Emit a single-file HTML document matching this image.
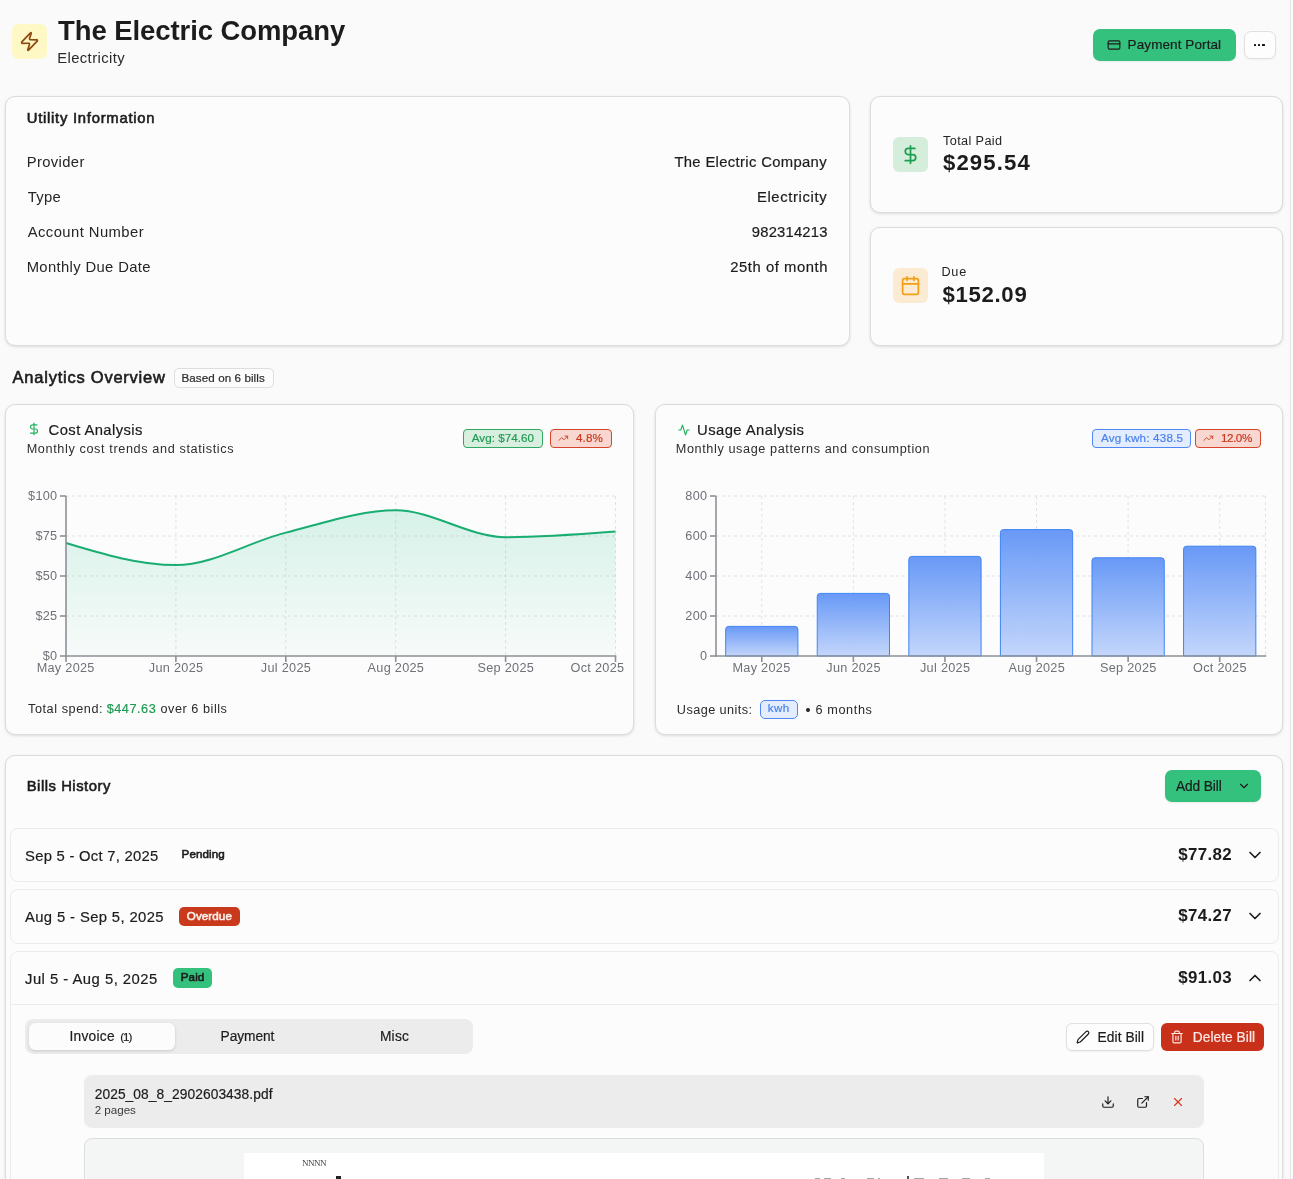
<!DOCTYPE html>
<html><head><meta charset="utf-8"><style>
html,body{margin:0;padding:0;}
body{width:1293px;height:1179px;overflow:hidden;position:relative;background:#fafafa;font-family:"Liberation Sans",sans-serif;}
.t{position:absolute;white-space:pre;}
.tl{position:absolute;left:0;top:0;width:1293px;height:1179px;will-change:transform;}
svg{position:absolute;overflow:visible;}
</style></head><body>
<div style="position:absolute;left:1290px;top:0px;width:1px;height:1179px;background:#e6e6e6;"></div>
<div style="position:absolute;left:12px;top:24px;width:35px;height:35px;background:#fdf8c6;border-radius:6px;"></div>
<div style="position:absolute;left:1093px;top:29px;width:143px;height:32px;background:#34c17e;border-radius:7px;box-shadow:0 1px 2px rgba(0,0,0,0.06);"></div>
<div style="position:absolute;left:1244px;top:31px;width:32px;height:28px;background:#fdfdfd;border:1px solid #e0e0e0;border-radius:7px;box-sizing:border-box;box-shadow:0 1px 2px rgba(0,0,0,0.05);"></div>
<div style="position:absolute;left:1253.7px;top:43.6px;width:2.400000000000091px;height:2.3999999999999986px;background:#111;border-radius:0.6px;"></div>
<div style="position:absolute;left:1258.0px;top:43.6px;width:2.400000000000091px;height:2.3999999999999986px;background:#111;border-radius:0.6px;"></div>
<div style="position:absolute;left:1262.3px;top:43.6px;width:2.400000000000091px;height:2.3999999999999986px;background:#111;border-radius:0.6px;"></div>
<div style="position:absolute;left:5px;top:96px;width:845px;height:250px;background:#fcfcfc;border:1px solid #dcdcdc;border-radius:10px;box-shadow:0 1px 3px rgba(0,0,0,0.12);box-sizing:border-box;"></div>
<div style="position:absolute;left:870px;top:96px;width:413px;height:117px;background:#fcfcfc;border:1px solid #dcdcdc;border-radius:10px;box-shadow:0 1px 3px rgba(0,0,0,0.12);box-sizing:border-box;"></div>
<div style="position:absolute;left:870px;top:227px;width:413px;height:119px;background:#fcfcfc;border:1px solid #dcdcdc;border-radius:10px;box-shadow:0 1px 3px rgba(0,0,0,0.12);box-sizing:border-box;"></div>
<div style="position:absolute;left:893px;top:137px;width:35px;height:35px;background:#d5eddb;border-radius:6px;"></div>
<div style="position:absolute;left:893px;top:268px;width:35px;height:35px;background:#fcebd3;border-radius:6px;"></div>
<div style="position:absolute;left:174px;top:368px;width:100px;height:20px;background:#fcfcfc;border:1px solid #dedede;border-radius:5px;box-sizing:border-box;"></div>
<div style="position:absolute;left:5px;top:404px;width:629px;height:331px;background:#fcfcfc;border:1px solid #dcdcdc;border-radius:10px;box-shadow:0 1px 3px rgba(0,0,0,0.12);box-sizing:border-box;"></div>
<div style="position:absolute;left:463px;top:429px;width:80px;height:19px;background:#d8efe0;border:1px solid #2ea862;border-radius:4px;box-sizing:border-box;"></div>
<div style="position:absolute;left:550px;top:429px;width:62px;height:19px;background:#f8d7d0;border:1px solid #d6442a;border-radius:4px;box-sizing:border-box;"></div>
<div style="position:absolute;left:655px;top:404px;width:628px;height:331px;background:#fcfcfc;border:1px solid #dcdcdc;border-radius:10px;box-shadow:0 1px 3px rgba(0,0,0,0.12);box-sizing:border-box;"></div>
<div style="position:absolute;left:1092px;top:429px;width:99px;height:19px;background:#e4edfd;border:1px solid #4f88f2;border-radius:4px;box-sizing:border-box;"></div>
<div style="position:absolute;left:1195px;top:429px;width:66px;height:19px;background:#f8d7d0;border:1px solid #d6442a;border-radius:4px;box-sizing:border-box;"></div>
<div style="position:absolute;left:5px;top:755px;width:1278px;height:505px;background:#fcfcfc;border:1px solid #dcdcdc;border-radius:10px;box-shadow:0 1px 3px rgba(0,0,0,0.12);box-sizing:border-box;"></div>
<div style="position:absolute;left:1165px;top:770px;width:96px;height:32px;background:#34c17e;border-radius:7px;box-shadow:0 1px 2px rgba(0,0,0,0.08);"></div>
<div style="position:absolute;left:10px;top:828px;width:1269px;height:54px;background:#fcfcfc;border:1px solid #ececec;border-radius:8px;box-sizing:border-box;"></div>
<div style="position:absolute;left:10px;top:889px;width:1269px;height:55px;background:#fcfcfc;border:1px solid #ececec;border-radius:8px;box-sizing:border-box;"></div>
<div style="position:absolute;left:10px;top:951px;width:1269px;height:309px;background:#fcfcfc;border:1px solid #ececec;border-radius:8px;box-sizing:border-box;"></div>
<div style="position:absolute;left:175px;top:846px;width:57px;height:19px;background:#fdfdfd;border-radius:5px;"></div>
<div style="position:absolute;left:179px;top:907px;width:61px;height:19px;background:#c93a1c;border-radius:5px;"></div>
<div style="position:absolute;left:173px;top:968px;width:39px;height:20px;background:#34c17e;border-radius:5px;"></div>
<div style="position:absolute;left:11px;top:1004px;width:1267px;height:1px;background:#ececec;"></div>
<div style="position:absolute;left:25px;top:1019px;width:448px;height:35px;background:#ececec;border-radius:8px;"></div>
<div style="position:absolute;left:29px;top:1023px;width:146px;height:27px;background:#fcfcfc;border-radius:6px;box-shadow:0 1px 3px rgba(0,0,0,0.16);"></div>
<div style="position:absolute;left:1066px;top:1023px;width:88px;height:28px;background:#fdfdfd;border:1px solid #e0e0e0;border-radius:6px;box-sizing:border-box;box-shadow:0 1px 2px rgba(0,0,0,0.06);"></div>
<div style="position:absolute;left:1161px;top:1023px;width:103px;height:28px;background:#c9301a;border-radius:6px;"></div>
<div style="position:absolute;left:84px;top:1075px;width:1120px;height:53px;background:#ececec;border-radius:8px;"></div>
<div style="position:absolute;left:84px;top:1138px;width:1120px;height:122px;background:#f4f5f5;border:1px solid #dddddd;border-radius:8px;box-sizing:border-box;"></div>
<div style="position:absolute;left:244px;top:1153px;width:800px;height:107px;background:#ffffff;"></div>
<svg style="left:0;top:0" width="1293" height="1179">
<defs><linearGradient id="cg" x1="0" y1="0" x2="0" y2="1"><stop offset="0%" stop-color="#10b981" stop-opacity="0.16"/><stop offset="100%" stop-color="#10b981" stop-opacity="0.02"/></linearGradient>
<linearGradient id="bg" x1="0" y1="0" x2="0" y2="1"><stop offset="0%" stop-color="#6496f6" stop-opacity="0.97"/><stop offset="100%" stop-color="#c2d5fb" stop-opacity="0.97"/></linearGradient></defs>
<line x1="66" x2="615.5" y1="496" y2="496" stroke="#e2e2e2" stroke-dasharray="3 3"/>
<line x1="66" x2="615.5" y1="536" y2="536" stroke="#e2e2e2" stroke-dasharray="3 3"/>
<line x1="66" x2="615.5" y1="576" y2="576" stroke="#e2e2e2" stroke-dasharray="3 3"/>
<line x1="66" x2="615.5" y1="616" y2="616" stroke="#e2e2e2" stroke-dasharray="3 3"/>
<line x1="175.9" x2="175.9" y1="496" y2="656" stroke="#e2e2e2" stroke-dasharray="3 3"/>
<line x1="285.8" x2="285.8" y1="496" y2="656" stroke="#e2e2e2" stroke-dasharray="3 3"/>
<line x1="395.70000000000005" x2="395.70000000000005" y1="496" y2="656" stroke="#e2e2e2" stroke-dasharray="3 3"/>
<line x1="505.6" x2="505.6" y1="496" y2="656" stroke="#e2e2e2" stroke-dasharray="3 3"/>
<line x1="615.5" x2="615.5" y1="496" y2="656" stroke="#e2e2e2" stroke-dasharray="3 3"/>
<path d="M66.00,543.04C102.63,554.08 139.27,565.12 175.90,565.12C212.53,565.12 249.17,541.77 285.80,532.64C322.43,523.51 359.07,510.35 395.70,510.35C432.33,510.35 468.97,537.17 505.60,537.17C542.23,537.17 578.87,534.33 615.50,531.49L615.5,656L66,656Z" fill="url(#cg)"/>
<path d="M66.00,543.04C102.63,554.08 139.27,565.12 175.90,565.12C212.53,565.12 249.17,541.77 285.80,532.64C322.43,523.51 359.07,510.35 395.70,510.35C432.33,510.35 468.97,537.17 505.60,537.17C542.23,537.17 578.87,534.33 615.50,531.49" fill="none" stroke="#19ad72" stroke-width="2"/>
<line x1="66" x2="66" y1="496" y2="656.8" stroke="#8d9097" stroke-width="1.6"/>
<line x1="65.2" x2="616.3" y1="656" y2="656" stroke="#8d9097" stroke-width="1.6"/>
<line x1="60" x2="66" y1="496" y2="496" stroke="#8d9097" stroke-width="1.6"/>
<line x1="60" x2="66" y1="536" y2="536" stroke="#8d9097" stroke-width="1.6"/>
<line x1="60" x2="66" y1="576" y2="576" stroke="#8d9097" stroke-width="1.6"/>
<line x1="60" x2="66" y1="616" y2="616" stroke="#8d9097" stroke-width="1.6"/>
<line x1="60" x2="66" y1="656" y2="656" stroke="#8d9097" stroke-width="1.6"/>
<line x1="66.0" x2="66.0" y1="656" y2="662" stroke="#8d9097" stroke-width="1.6"/>
<line x1="175.9" x2="175.9" y1="656" y2="662" stroke="#8d9097" stroke-width="1.6"/>
<line x1="285.8" x2="285.8" y1="656" y2="662" stroke="#8d9097" stroke-width="1.6"/>
<line x1="395.70000000000005" x2="395.70000000000005" y1="656" y2="662" stroke="#8d9097" stroke-width="1.6"/>
<line x1="505.6" x2="505.6" y1="656" y2="662" stroke="#8d9097" stroke-width="1.6"/>
<line x1="615.5" x2="615.5" y1="656" y2="662" stroke="#8d9097" stroke-width="1.6"/>
<line x1="716" x2="1265.5" y1="496" y2="496" stroke="#e2e2e2" stroke-dasharray="3 3"/>
<line x1="716" x2="1265.5" y1="536" y2="536" stroke="#e2e2e2" stroke-dasharray="3 3"/>
<line x1="716" x2="1265.5" y1="576" y2="576" stroke="#e2e2e2" stroke-dasharray="3 3"/>
<line x1="716" x2="1265.5" y1="616" y2="616" stroke="#e2e2e2" stroke-dasharray="3 3"/>
<line x1="761.79" x2="761.79" y1="496" y2="656" stroke="#e2e2e2" stroke-dasharray="3 3"/>
<line x1="853.38" x2="853.38" y1="496" y2="656" stroke="#e2e2e2" stroke-dasharray="3 3"/>
<line x1="944.96" x2="944.96" y1="496" y2="656" stroke="#e2e2e2" stroke-dasharray="3 3"/>
<line x1="1036.54" x2="1036.54" y1="496" y2="656" stroke="#e2e2e2" stroke-dasharray="3 3"/>
<line x1="1128.12" x2="1128.12" y1="496" y2="656" stroke="#e2e2e2" stroke-dasharray="3 3"/>
<line x1="1219.71" x2="1219.71" y1="496" y2="656" stroke="#e2e2e2" stroke-dasharray="3 3"/>
<line x1="1265.50" x2="1265.50" y1="496" y2="656" stroke="#e2e2e2" stroke-dasharray="3 3"/>
<path d="M725.66,656 L725.66,629.40 Q725.66,626.40 728.66,626.40 L794.92,626.40 Q797.92,626.40 797.92,629.40 L797.92,656 Z" fill="url(#bg)" stroke="#3f84f6" stroke-width="1"/>
<path d="M817.24,656 L817.24,596.40 Q817.24,593.40 820.24,593.40 L886.51,593.40 Q889.51,593.40 889.51,596.40 L889.51,656 Z" fill="url(#bg)" stroke="#3f84f6" stroke-width="1"/>
<path d="M908.82,656 L908.82,559.40 Q908.82,556.40 911.82,556.40 L978.09,556.40 Q981.09,556.40 981.09,559.40 L981.09,656 Z" fill="url(#bg)" stroke="#3f84f6" stroke-width="1"/>
<path d="M1000.41,656 L1000.41,532.60 Q1000.41,529.60 1003.41,529.60 L1069.67,529.60 Q1072.67,529.60 1072.67,532.60 L1072.67,656 Z" fill="url(#bg)" stroke="#3f84f6" stroke-width="1"/>
<path d="M1091.99,656 L1091.99,560.80 Q1091.99,557.80 1094.99,557.80 L1161.26,557.80 Q1164.26,557.80 1164.26,560.80 L1164.26,656 Z" fill="url(#bg)" stroke="#3f84f6" stroke-width="1"/>
<path d="M1183.57,656 L1183.57,549.20 Q1183.57,546.20 1186.57,546.20 L1252.84,546.20 Q1255.84,546.20 1255.84,549.20 L1255.84,656 Z" fill="url(#bg)" stroke="#3f84f6" stroke-width="1"/>
<line x1="716" x2="716" y1="496" y2="656.8" stroke="#8d9097" stroke-width="1.6"/>
<line x1="715.2" x2="1266.3" y1="656" y2="656" stroke="#8d9097" stroke-width="1.6"/>
<line x1="710" x2="716" y1="496" y2="496" stroke="#8d9097" stroke-width="1.6"/>
<line x1="710" x2="716" y1="536" y2="536" stroke="#8d9097" stroke-width="1.6"/>
<line x1="710" x2="716" y1="576" y2="576" stroke="#8d9097" stroke-width="1.6"/>
<line x1="710" x2="716" y1="616" y2="616" stroke="#8d9097" stroke-width="1.6"/>
<line x1="710" x2="716" y1="656" y2="656" stroke="#8d9097" stroke-width="1.6"/>
<line x1="761.79" x2="761.79" y1="656" y2="662" stroke="#8d9097" stroke-width="1.6"/>
<line x1="853.38" x2="853.38" y1="656" y2="662" stroke="#8d9097" stroke-width="1.6"/>
<line x1="944.96" x2="944.96" y1="656" y2="662" stroke="#8d9097" stroke-width="1.6"/>
<line x1="1036.54" x2="1036.54" y1="656" y2="662" stroke="#8d9097" stroke-width="1.6"/>
<line x1="1128.12" x2="1128.12" y1="656" y2="662" stroke="#8d9097" stroke-width="1.6"/>
<line x1="1219.71" x2="1219.71" y1="656" y2="662" stroke="#8d9097" stroke-width="1.6"/>
</svg>
<div style="position:absolute;left:760px;top:700px;width:38px;height:19px;background:#e4edfd;border:1px solid #4f88f2;border-radius:5px;box-sizing:border-box;"></div>
<div style="position:absolute;left:806px;top:708px;width:4px;height:4px;background:#222;border-radius:50%;"></div>
<div style="position:absolute;left:814.7px;top:1177.6px;width:5.2999999999999545px;height:1.400000000000091px;background:#a5a5a5;"></div>
<div style="position:absolute;left:824px;top:1177.6px;width:7px;height:1.400000000000091px;background:#a5a5a5;"></div>
<div style="position:absolute;left:841px;top:1177.6px;width:4px;height:1.400000000000091px;background:#a5a5a5;"></div>
<div style="position:absolute;left:866.5px;top:1177.6px;width:7.0px;height:1.400000000000091px;background:#a5a5a5;"></div>
<div style="position:absolute;left:878px;top:1177.6px;width:2px;height:1.400000000000091px;background:#a5a5a5;"></div>
<div style="position:absolute;left:914px;top:1177.6px;width:10px;height:1.400000000000091px;background:#a5a5a5;"></div>
<div style="position:absolute;left:939px;top:1177.6px;width:9px;height:1.400000000000091px;background:#a5a5a5;"></div>
<div style="position:absolute;left:961.6px;top:1177.6px;width:8.399999999999977px;height:1.400000000000091px;background:#a5a5a5;"></div>
<div style="position:absolute;left:985px;top:1177.6px;width:4.5px;height:1.400000000000091px;background:#a5a5a5;"></div>
<div style="position:absolute;left:907px;top:1175.5px;width:2px;height:3.5px;background:#555;"></div>
<div style="position:absolute;left:336px;top:1176px;width:5px;height:3px;background:#222;"></div>
<div class="tl">
<div class="t" style="left:58.00px;top:16.74px;font-size:27.48px;line-height:27.48px;font-weight:700;color:#1c1c1c;letter-spacing:-0.065px;">The Electric Company</div>
<div class="t" style="left:57.20px;top:51.47px;font-size:14.8px;line-height:14.8px;font-weight:400;color:#2a2a2a;letter-spacing:0.409px;">Electricity</div>
<div class="t" style="left:1127.60px;top:37.87px;font-size:13.5px;line-height:13.5px;font-weight:400;color:#1c1c1c;letter-spacing:0.093px;-webkit-text-stroke:0.2px #1c1c1c;">Payment Portal</div>
<div class="t" style="left:26.70px;top:111.47px;font-size:14.8px;line-height:14.8px;font-weight:400;color:#1c1c1c;letter-spacing:0.752px;-webkit-text-stroke:0.6px #1c1c1c;">Utility Information</div>
<div class="t" style="left:26.70px;top:155.47px;font-size:14.8px;line-height:14.8px;font-weight:400;color:#252525;letter-spacing:0.361px;">Provider</div>
<div class="t" style="left:27.70px;top:190.47px;font-size:14.8px;line-height:14.8px;font-weight:400;color:#252525;letter-spacing:0.317px;">Type</div>
<div class="t" style="left:27.70px;top:225.47px;font-size:14.8px;line-height:14.8px;font-weight:400;color:#252525;letter-spacing:0.440px;">Account Number</div>
<div class="t" style="left:26.70px;top:260.47px;font-size:14.8px;line-height:14.8px;font-weight:400;color:#252525;letter-spacing:0.360px;">Monthly Due Date</div>
<div class="t" style="left:674.40px;top:155.47px;font-size:14.8px;line-height:14.8px;font-weight:400;color:#1c1c1c;letter-spacing:0.350px;-webkit-text-stroke:0.2px #1c1c1c;">The Electric Company</div>
<div class="t" style="left:756.90px;top:190.47px;font-size:14.8px;line-height:14.8px;font-weight:400;color:#1c1c1c;letter-spacing:0.639px;-webkit-text-stroke:0.2px #1c1c1c;">Electricity</div>
<div class="t" style="left:751.80px;top:225.47px;font-size:14.8px;line-height:14.8px;font-weight:400;color:#1c1c1c;letter-spacing:0.196px;-webkit-text-stroke:0.2px #1c1c1c;">982314213</div>
<div class="t" style="left:730.30px;top:260.47px;font-size:14.8px;line-height:14.8px;font-weight:400;color:#1c1c1c;letter-spacing:0.554px;-webkit-text-stroke:0.2px #1c1c1c;">25th of month</div>
<div class="t" style="left:943.00px;top:135.27px;font-size:12.68px;line-height:12.68px;font-weight:400;color:#252525;letter-spacing:0.378px;">Total Paid</div>
<div class="t" style="left:943.00px;top:151.81px;font-size:22.2px;line-height:22.2px;font-weight:700;color:#1c1c1c;letter-spacing:1.090px;">$295.54</div>
<div class="t" style="left:941.40px;top:266.27px;font-size:12.68px;line-height:12.68px;font-weight:400;color:#252525;letter-spacing:0.801px;">Due</div>
<div class="t" style="left:942.40px;top:283.61px;font-size:22.2px;line-height:22.2px;font-weight:700;color:#1c1c1c;letter-spacing:0.690px;">$152.09</div>
<div class="t" style="left:12.60px;top:369.43px;font-size:16.5px;line-height:16.5px;font-weight:400;color:#1c1c1c;letter-spacing:0.761px;-webkit-text-stroke:0.6px #1c1c1c;">Analytics Overview</div>
<div class="t" style="left:181.50px;top:371.86px;font-size:11.63px;line-height:11.63px;font-weight:400;color:#2a2a2a;letter-spacing:0.076px;-webkit-text-stroke:0.2px #2a2a2a;">Based on 6 bills</div>
<div class="t" style="left:48.60px;top:423.07px;font-size:14.8px;line-height:14.8px;font-weight:400;color:#1c1c1c;letter-spacing:0.422px;-webkit-text-stroke:0.2px #1c1c1c;">Cost Analysis</div>
<div class="t" style="left:26.70px;top:443.07px;font-size:12.68px;line-height:12.68px;font-weight:400;color:#2e2e2e;letter-spacing:0.612px;">Monthly cost trends and statistics</div>
<div class="t" style="left:471.80px;top:432.26px;font-size:11.63px;line-height:11.63px;font-weight:400;color:#1f9a52;letter-spacing:0.023px;-webkit-text-stroke:0.2px #1f9a52;">Avg: $74.60</div>
<div class="t" style="left:576.00px;top:432.26px;font-size:11.63px;line-height:11.63px;font-weight:400;color:#c9381f;letter-spacing:0.113px;-webkit-text-stroke:0.2px #c9381f;">4.8%</div>
<div class="t" style="left:697.00px;top:423.47px;font-size:14.8px;line-height:14.8px;font-weight:400;color:#1c1c1c;letter-spacing:0.447px;-webkit-text-stroke:0.2px #1c1c1c;">Usage Analysis</div>
<div class="t" style="left:675.80px;top:443.07px;font-size:12.68px;line-height:12.68px;font-weight:400;color:#2e2e2e;letter-spacing:0.594px;">Monthly usage patterns and consumption</div>
<div class="t" style="left:1101.10px;top:432.26px;font-size:11.63px;line-height:11.63px;font-weight:400;color:#4a82ec;letter-spacing:0.199px;-webkit-text-stroke:0.2px #4a82ec;">Avg kwh: 438.5</div>
<div class="t" style="left:1220.90px;top:432.26px;font-size:11.63px;line-height:11.63px;font-weight:400;color:#c9381f;letter-spacing:-0.406px;-webkit-text-stroke:0.2px #c9381f;">12.0%</div>
<div class="t" style="left:26.70px;top:779.47px;font-size:14.8px;line-height:14.8px;font-weight:400;color:#1c1c1c;letter-spacing:0.535px;-webkit-text-stroke:0.6px #1c1c1c;">Bills History</div>
<div class="t" style="left:1176.00px;top:780.37px;font-size:13.74px;line-height:13.74px;font-weight:400;color:#1c1c1c;letter-spacing:-0.117px;-webkit-text-stroke:0.2px #1c1c1c;">Add Bill</div>
<div class="t" style="left:25.00px;top:849.17px;font-size:14.8px;line-height:14.8px;font-weight:400;color:#1c1c1c;letter-spacing:0.273px;-webkit-text-stroke:0.2px #1c1c1c;">Sep 5 - Oct 7, 2025</div>
<div class="t" style="left:1178.20px;top:847.39px;font-size:16.91px;line-height:16.91px;font-weight:700;color:#1c1c1c;letter-spacing:0.339px;">$77.82</div>
<div class="t" style="left:25.00px;top:910.17px;font-size:14.8px;line-height:14.8px;font-weight:400;color:#1c1c1c;letter-spacing:0.384px;-webkit-text-stroke:0.2px #1c1c1c;">Aug 5 - Sep 5, 2025</div>
<div class="t" style="left:1178.20px;top:908.39px;font-size:16.91px;line-height:16.91px;font-weight:700;color:#1c1c1c;letter-spacing:0.339px;">$74.27</div>
<div class="t" style="left:25.00px;top:971.67px;font-size:14.8px;line-height:14.8px;font-weight:400;color:#1c1c1c;letter-spacing:0.490px;-webkit-text-stroke:0.2px #1c1c1c;">Jul 5 - Aug 5, 2025</div>
<div class="t" style="left:1178.20px;top:969.89px;font-size:16.91px;line-height:16.91px;font-weight:700;color:#1c1c1c;letter-spacing:0.339px;">$91.03</div>
<div class="t" style="left:181.60px;top:848.46px;font-size:11.63px;line-height:11.63px;font-weight:400;color:#1c1c1c;letter-spacing:0.084px;-webkit-text-stroke:0.6px #1c1c1c;">Pending</div>
<div class="t" style="left:186.80px;top:909.66px;font-size:11.63px;line-height:11.63px;font-weight:400;color:#fbeee9;letter-spacing:0.080px;-webkit-text-stroke:0.6px #fbeee9;">Overdue</div>
<div class="t" style="left:180.80px;top:970.96px;font-size:11.63px;line-height:11.63px;font-weight:400;color:#1c1c1c;letter-spacing:0.066px;-webkit-text-stroke:0.6px #1c1c1c;">Paid</div>
<div class="t" style="left:69.40px;top:1030.37px;font-size:13.74px;line-height:13.74px;font-weight:400;color:#1c1c1c;letter-spacing:0.270px;-webkit-text-stroke:0.2px #1c1c1c;">Invoice</div>
<div class="t" style="left:120.30px;top:1030.66px;font-size:11.63px;line-height:11.63px;font-weight:400;color:#1c1c1c;letter-spacing:-1.068px;-webkit-text-stroke:0.2px #1c1c1c;">(1)</div>
<div class="t" style="left:220.60px;top:1030.37px;font-size:13.74px;line-height:13.74px;font-weight:400;color:#1c1c1c;letter-spacing:-0.064px;-webkit-text-stroke:0.2px #1c1c1c;">Payment</div>
<div class="t" style="left:379.90px;top:1030.37px;font-size:13.74px;line-height:13.74px;font-weight:400;color:#1c1c1c;letter-spacing:0.280px;-webkit-text-stroke:0.2px #1c1c1c;">Misc</div>
<div class="t" style="left:1097.60px;top:1030.87px;font-size:13.74px;line-height:13.74px;font-weight:400;color:#1c1c1c;letter-spacing:0.069px;-webkit-text-stroke:0.2px #1c1c1c;">Edit Bill</div>
<div class="t" style="left:1192.80px;top:1030.87px;font-size:13.74px;line-height:13.74px;font-weight:400;color:#fbe9e4;letter-spacing:0.042px;-webkit-text-stroke:0.2px #fbe9e4;">Delete Bill</div>
<div class="t" style="left:94.70px;top:1087.97px;font-size:13.74px;line-height:13.74px;font-weight:400;color:#1c1c1c;letter-spacing:0.093px;-webkit-text-stroke:0.2px #1c1c1c;">2025_08_8_2902603438.pdf</div>
<div class="t" style="left:94.70px;top:1103.66px;font-size:11.63px;line-height:11.63px;font-weight:400;color:#3a3a3a;letter-spacing:-0.026px;">2 pages</div>
<div class="t" style="left:302.00px;top:1159.38px;font-size:9.0px;line-height:9.0px;font-weight:400;color:#444;letter-spacing:-0.500px;font-family:'Liberation Serif',serif;">NNNN</div>
<div class="t" style="left:28.06px;top:490.27px;font-size:12.68px;line-height:12.68px;font-weight:400;color:#6f7178;letter-spacing:0.300px;">$100</div>
<div class="t" style="left:35.40px;top:530.27px;font-size:12.68px;line-height:12.68px;font-weight:400;color:#6f7178;letter-spacing:0.300px;">$75</div>
<div class="t" style="left:35.40px;top:570.27px;font-size:12.68px;line-height:12.68px;font-weight:400;color:#6f7178;letter-spacing:0.300px;">$50</div>
<div class="t" style="left:35.40px;top:610.27px;font-size:12.68px;line-height:12.68px;font-weight:400;color:#6f7178;letter-spacing:0.300px;">$25</div>
<div class="t" style="left:42.75px;top:650.27px;font-size:12.68px;line-height:12.68px;font-weight:400;color:#6f7178;letter-spacing:0.300px;">$0</div>
<div class="t" style="left:685.30px;top:490.27px;font-size:12.68px;line-height:12.68px;font-weight:400;color:#6f7178;letter-spacing:0.300px;">800</div>
<div class="t" style="left:685.30px;top:530.27px;font-size:12.68px;line-height:12.68px;font-weight:400;color:#6f7178;letter-spacing:0.300px;">600</div>
<div class="t" style="left:685.30px;top:570.27px;font-size:12.68px;line-height:12.68px;font-weight:400;color:#6f7178;letter-spacing:0.300px;">400</div>
<div class="t" style="left:685.30px;top:610.27px;font-size:12.68px;line-height:12.68px;font-weight:400;color:#6f7178;letter-spacing:0.300px;">200</div>
<div class="t" style="left:700.00px;top:650.27px;font-size:12.68px;line-height:12.68px;font-weight:400;color:#6f7178;letter-spacing:0.300px;">0</div>
<div class="t" style="left:36.65px;top:661.87px;font-size:12.68px;line-height:12.68px;font-weight:400;color:#6f7178;letter-spacing:0.300px;">May 2025</div>
<div class="t" style="left:148.80px;top:661.87px;font-size:12.68px;line-height:12.68px;font-weight:400;color:#6f7178;letter-spacing:0.300px;">Jun 2025</div>
<div class="t" style="left:260.82px;top:661.87px;font-size:12.68px;line-height:12.68px;font-weight:400;color:#6f7178;letter-spacing:0.300px;">Jul 2025</div>
<div class="t" style="left:367.54px;top:661.87px;font-size:12.68px;line-height:12.68px;font-weight:400;color:#6f7178;letter-spacing:0.300px;">Aug 2025</div>
<div class="t" style="left:477.44px;top:661.87px;font-size:12.68px;line-height:12.68px;font-weight:400;color:#6f7178;letter-spacing:0.300px;">Sep 2025</div>
<div class="t" style="left:570.56px;top:661.87px;font-size:12.68px;line-height:12.68px;font-weight:400;color:#6f7178;letter-spacing:0.300px;">Oct 2025</div>
<div class="t" style="left:732.44px;top:661.87px;font-size:12.68px;line-height:12.68px;font-weight:400;color:#6f7178;letter-spacing:0.300px;">May 2025</div>
<div class="t" style="left:826.28px;top:661.87px;font-size:12.68px;line-height:12.68px;font-weight:400;color:#6f7178;letter-spacing:0.300px;">Jun 2025</div>
<div class="t" style="left:919.98px;top:661.87px;font-size:12.68px;line-height:12.68px;font-weight:400;color:#6f7178;letter-spacing:0.300px;">Jul 2025</div>
<div class="t" style="left:1008.39px;top:661.87px;font-size:12.68px;line-height:12.68px;font-weight:400;color:#6f7178;letter-spacing:0.300px;">Aug 2025</div>
<div class="t" style="left:1099.97px;top:661.87px;font-size:12.68px;line-height:12.68px;font-weight:400;color:#6f7178;letter-spacing:0.300px;">Sep 2025</div>
<div class="t" style="left:1192.97px;top:661.87px;font-size:12.68px;line-height:12.68px;font-weight:400;color:#6f7178;letter-spacing:0.300px;">Oct 2025</div>
<div class="t" style="left:28.00px;top:703.27px;font-size:12.68px;line-height:12.68px;font-weight:400;color:#2a2a2a;letter-spacing:0.562px;">Total spend:</div>
<div class="t" style="left:106.70px;top:703.27px;font-size:12.68px;line-height:12.68px;font-weight:400;color:#1f9a52;letter-spacing:0.540px;-webkit-text-stroke:0.2px #1f9a52;">$447.63</div>
<div class="t" style="left:160.50px;top:703.27px;font-size:12.68px;line-height:12.68px;font-weight:400;color:#2a2a2a;letter-spacing:0.533px;">over 6 bills</div>
<div class="t" style="left:676.80px;top:704.27px;font-size:12.68px;line-height:12.68px;font-weight:400;color:#2a2a2a;letter-spacing:0.444px;">Usage units:</div>
<div class="t" style="left:767.70px;top:701.66px;font-size:11.63px;line-height:11.63px;font-weight:400;color:#4a82ec;letter-spacing:0.396px;-webkit-text-stroke:0.2px #4a82ec;">kwh</div>
<div class="t" style="left:815.40px;top:704.27px;font-size:12.68px;line-height:12.68px;font-weight:400;color:#2a2a2a;letter-spacing:0.630px;">6 months</div>
</div>
<svg style="left:19.1px;top:31.1px" width="21" height="21" viewBox="0 0 24 24" fill="none" stroke="#8f4a10" stroke-width="2" stroke-linecap="round" stroke-linejoin="round"><path d="M4 14a1 1 0 0 1-.78-1.63l9.9-10.2a.5.5 0 0 1 .86.46l-1.92 6.02A1 1 0 0 0 13 10h7a1 1 0 0 1 .78 1.63l-9.9 10.2a.5.5 0 0 1-.86-.46l1.92-6.02A1 1 0 0 0 11 14z"/></svg>
<svg style="left:1107px;top:38px" width="14" height="14" viewBox="0 0 24 24" fill="none" stroke="#1c1c1c" stroke-width="2" stroke-linecap="round" stroke-linejoin="round"><rect width="20" height="14" x="2" y="5" rx="2"/><line x1="2" x2="22" y1="10" y2="10"/></svg>
<svg style="left:900px;top:144px" width="21" height="21" viewBox="0 0 24 24" fill="none" stroke="#1e9e50" stroke-width="2" stroke-linecap="round" stroke-linejoin="round"><line x1="12" x2="12" y1="2" y2="22"/><path d="M17 5H9.5a3.5 3.5 0 0 0 0 7h5a3.5 3.5 0 0 1 0 7H6"/></svg>
<svg style="left:900px;top:275px" width="21" height="21" viewBox="0 0 24 24" fill="none" stroke="#f4a016" stroke-width="2" stroke-linecap="round" stroke-linejoin="round"><path d="M8 2v4"/><path d="M16 2v4"/><rect width="18" height="18" x="3" y="4" rx="2"/><path d="M3 10h18"/></svg>
<svg style="left:27.2px;top:422.4px" width="14" height="14" viewBox="0 0 24 24" fill="none" stroke="#22b35e" stroke-width="2" stroke-linecap="round" stroke-linejoin="round"><line x1="12" x2="12" y1="2" y2="22"/><path d="M17 5H9.5a3.5 3.5 0 0 0 0 7h5a3.5 3.5 0 0 1 0 7H6"/></svg>
<svg style="left:557.9px;top:432.9px" width="10.5" height="10.5" viewBox="0 0 24 24" fill="none" stroke="#c9381f" stroke-width="2" stroke-linecap="round" stroke-linejoin="round"><path d="M16 7h6v6"/><path d="m22 7-8.5 8.5-5-5L2 17"/></svg>
<svg style="left:676.9px;top:422.75px" width="14" height="14" viewBox="0 0 24 24" fill="none" stroke="#22b35e" stroke-width="2" stroke-linecap="round" stroke-linejoin="round"><path d="M21 12h-3.5l-3 8.5L9.5 3.5l-3 8.5H3"/></svg>
<svg style="left:1203px;top:432.9px" width="10.5" height="10.5" viewBox="0 0 24 24" fill="none" stroke="#c9381f" stroke-width="2" stroke-linecap="round" stroke-linejoin="round"><path d="M16 7h6v6"/><path d="m22 7-8.5 8.5-5-5L2 17"/></svg>
<svg style="left:1237.1px;top:778.8px" width="14" height="14" viewBox="0 0 24 24" fill="none" stroke="#1c1c1c" stroke-width="2" stroke-linecap="round" stroke-linejoin="round"><path d="m6 9 6 6 6-6"/></svg>
<svg style="left:1244.7px;top:845.1px" width="20" height="20" viewBox="0 0 24 24" fill="none" stroke="#1c1c1c" stroke-width="2" stroke-linecap="round" stroke-linejoin="round"><path d="m6 9 6 6 6-6"/></svg>
<svg style="left:1244.7px;top:906.3px" width="20" height="20" viewBox="0 0 24 24" fill="none" stroke="#1c1c1c" stroke-width="2" stroke-linecap="round" stroke-linejoin="round"><path d="m6 9 6 6 6-6"/></svg>
<svg style="left:1244.7px;top:967.6px" width="20" height="20" viewBox="0 0 24 24" fill="none" stroke="#1c1c1c" stroke-width="2" stroke-linecap="round" stroke-linejoin="round"><path d="m18 15-6-6-6 6"/></svg>
<svg style="left:1076.1px;top:1029.8px" width="14" height="14" viewBox="0 0 24 24" fill="none" stroke="#1c1c1c" stroke-width="2" stroke-linecap="round" stroke-linejoin="round"><path d="M21.174 6.812a1 1 0 0 0-3.986-3.987L3.842 16.174a2 2 0 0 0-.5.83l-1.321 4.352a.5.5 0 0 0 .623.622l4.353-1.32a2 2 0 0 0 .83-.497z"/></svg>
<svg style="left:1169.7px;top:1029.5px" width="14" height="14" viewBox="0 0 24 24" fill="none" stroke="#fbe9e4" stroke-width="2" stroke-linecap="round" stroke-linejoin="round"><path d="M3 6h18"/><path d="M19 6v14c0 1-1 2-2 2H7c-1 0-2-1-2-2V6"/><path d="M8 6V4c0-1 1-2 2-2h4c1 0 2 1 2 2v2"/><line x1="10" x2="10" y1="11" y2="17"/><line x1="14" x2="14" y1="11" y2="17"/></svg>
<svg style="left:1101px;top:1095.3px" width="14" height="14" viewBox="0 0 24 24" fill="none" stroke="#1c1c1c" stroke-width="2" stroke-linecap="round" stroke-linejoin="round"><path d="M21 15v4a2 2 0 0 1-2 2H5a2 2 0 0 1-2-2v-4"/><polyline points="7 10 12 15 17 10"/><line x1="12" x2="12" y1="15" y2="3"/></svg>
<svg style="left:1136px;top:1095.3px" width="14" height="14" viewBox="0 0 24 24" fill="none" stroke="#1c1c1c" stroke-width="2" stroke-linecap="round" stroke-linejoin="round"><path d="M15 3h6v6"/><path d="M10 14 21 3"/><path d="M18 13v6a2 2 0 0 1-2 2H5a2 2 0 0 1-2-2V8a2 2 0 0 1 2-2h6"/></svg>
<svg style="left:1170.9px;top:1095.3px" width="14" height="14" viewBox="0 0 24 24" fill="none" stroke="#d23a1e" stroke-width="2" stroke-linecap="round" stroke-linejoin="round"><path d="M18 6 6 18"/><path d="m6 6 12 12"/></svg>
</body></html>
